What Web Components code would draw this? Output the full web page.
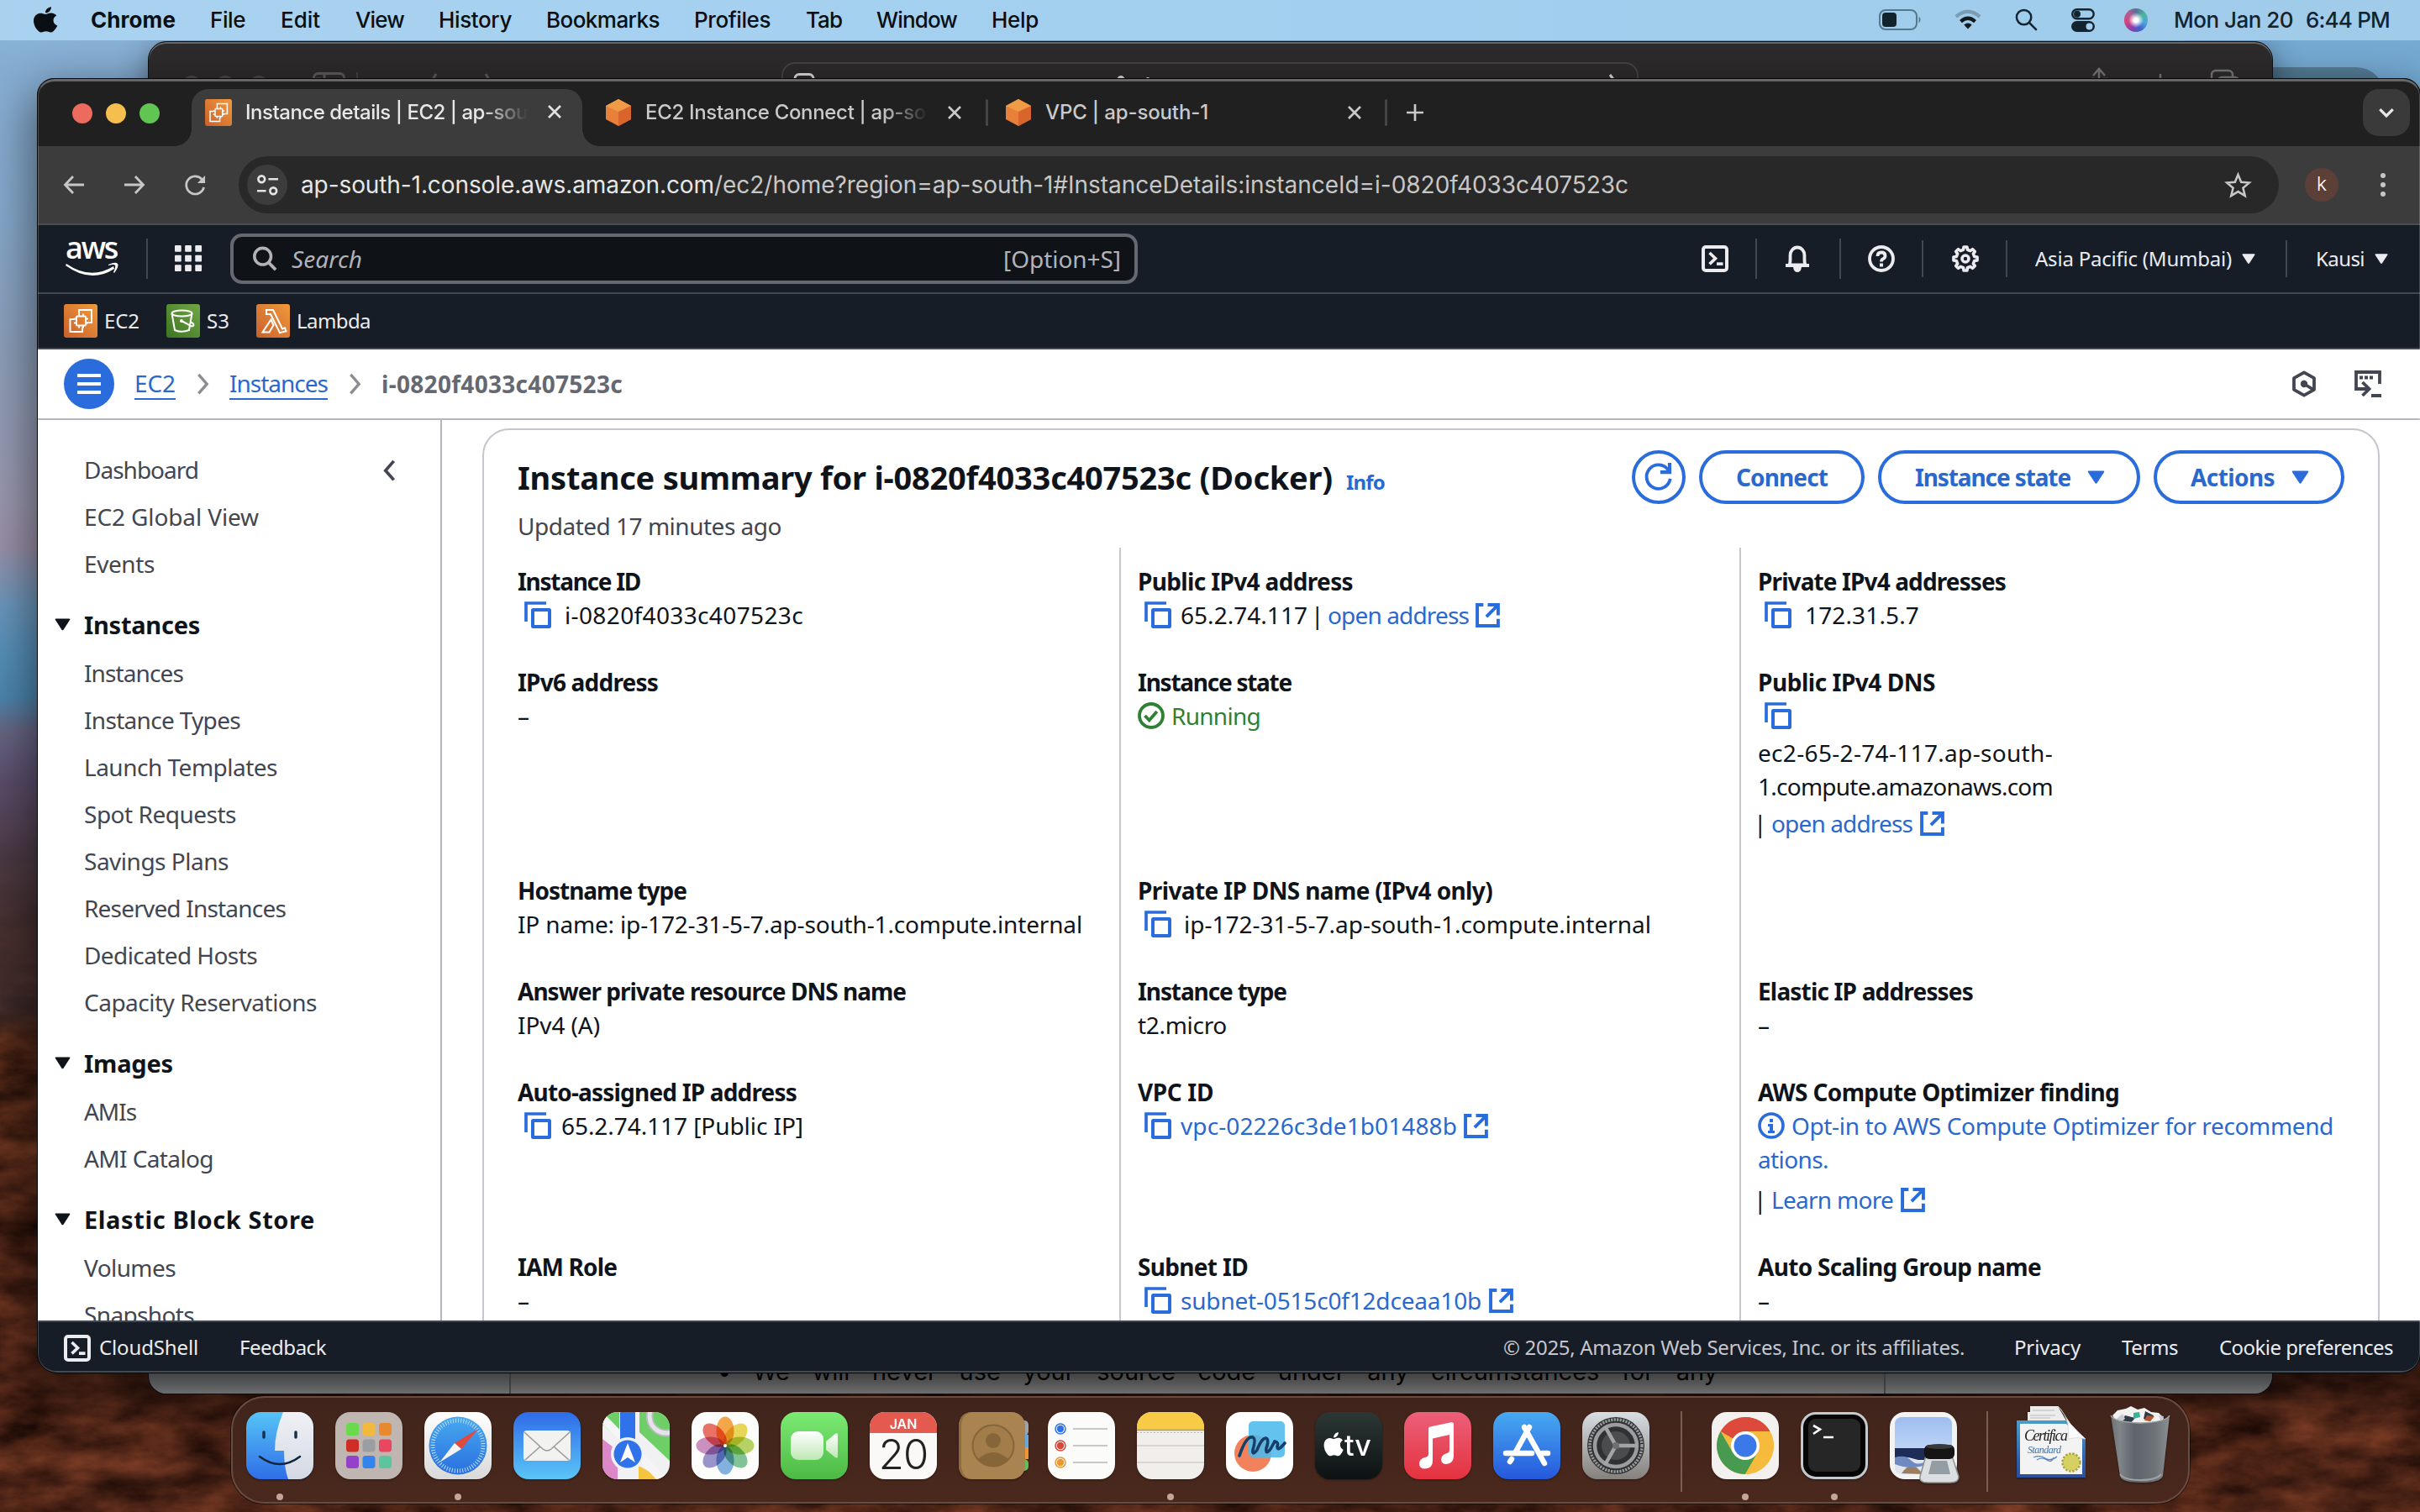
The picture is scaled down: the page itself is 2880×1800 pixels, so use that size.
<!DOCTYPE html>
<html lang="en">
<head>
<meta charset="utf-8">
<title>Instance details | EC2 | ap-south-1</title>
<style>
html,body{margin:0;padding:0;width:2880px;height:1800px;overflow:hidden;background:#3a1c12;font-family:"Noto Sans","Open Sans",sans-serif}
</style>
</head>
<body>
<mac-desktop></mac-desktop>
<script>
const APPLE='M12.152 6.896c-.948 0-2.415-1.078-3.96-1.04-2.04.027-3.91 1.183-4.961 3.014-2.117 3.675-.546 9.103 1.519 12.09 1.013 1.454 2.208 3.09 3.792 3.039 1.52-.065 2.09-.987 3.935-.987 1.831 0 2.35.987 3.96.948 1.637-.026 2.676-1.48 3.676-2.948 1.156-1.688 1.636-3.325 1.662-3.415-.039-.013-3.182-1.221-3.22-4.857-.026-3.04 2.48-4.494 2.597-4.559-1.429-2.09-3.623-2.324-4.39-2.376-2-.156-3.675 1.09-4.61 1.09zM15.53 3.83c.843-1.012 1.4-2.427 1.245-3.83-1.207.052-2.662.805-3.532 1.818-.78.896-1.454 2.338-1.273 3.714 1.338.104 2.715-.688 3.559-1.701';
const gear=(()=>{let p='';for(let i=0;i<8;i++){const c=i*45;[[-13,11],[-8,14.2],[8,14.2],[13,11]].forEach(([a,r])=>{const t=(c+a)*Math.PI/180;p+=(p?'L':'M')+(16+r*Math.sin(t)).toFixed(2)+' '+(16-r*Math.cos(t)).toFixed(2)});}return p+'Z'})();
/* [viewBox width, viewBox height, markup] */
const ICONS={
 apple:[26,31,`<path transform="translate(-4.2 .3) scale(1.44 1.26)" d="${APPLE}"/>`],
 battery:[51,25,`<rect x="1" y="1" width="44" height="23" rx="7" fill="none" stroke="#54788c" stroke-width="2"/><rect x="4" y="4" width="17" height="17" rx="4"/><path d="M47.500 8.500q4 4 0 8z" fill="#54788c"/>`],
 wifi:[36,26,`<g fill="none" stroke-width="4.600"><path d="M3 9.500q15-13 30 0" stroke="#7b9db4"/><path d="M9 15.500q9-8 18 0"/></g><path d="M13 19.500q5-4 10 0L18 25z"/>`],
 magnify:[28,28,`<g fill="none" stroke-width="2.600" stroke-linecap="round"><circle cx="11" cy="11" r="9"/><path d="M18 18l8 8"/></g>`],
 control:[28,28,`<rect x="1.200" y="1.200" width="25.500" height="11" rx="5.500" fill="none" stroke-width="2.400"/><circle cx="7" cy="6.700" r="4"/><rect y="15" width="28" height="13" rx="6.500"/><circle cx="21.500" cy="21.500" r="4" fill="#a4d0ef"/>`],
 back:[26,26,`<path d="M25 13H3M12 3L2.500 13 12 23" fill="none" stroke-width="2.800"/>`],
 fwd:[26,26,`<path d="M1 13H23M14 3l9.500 10L14 23" fill="none" stroke-width="2.800"/>`],
 reload:[26,26,`<path d="M23.500 15.500A11 11 0 1 1 21 5.500l2.500 3" fill="none" stroke-width="2.800"/><path d="M25 1v9.500h-9.500z"/>`],
 tune:[28,28,`<g fill="none" stroke-width="2.800"><circle cx="6.500" cy="6.500" r="4"/><path d="M15 6.500h12M1 21h11"/><circle cx="21" cy="21" r="4"/></g>`],
 star:[32,32,`<path d="M16 3l3.800 9.200 9.900.8-7.600 6.400 2.400 9.600L16 23.800 7.500 29l2.400-9.600L2.300 13l9.900-.8z" fill="none" stroke-width="2.600"/>`],
 dots:[8,30,`<circle cx="4" cy="4" r="3"/><circle cx="4" cy="15" r="3"/><circle cx="4" cy="26" r="3"/>`],
 x:[18,18,`<path d="M2 2l14 14M16 2L2 16" fill="none" stroke-width="2.700"/>`],
 plus:[22,22,`<path d="M11 1v20M1 11h20" fill="none" stroke-width="2.700"/>`],
 chevDown:[20,20,`<path d="M3 6.500l7 7 7-7" fill="none" stroke-width="3"/>`],
 ec2:[40,40,`<defs><linearGradient id="o" x1="0" y1="1" x2="1" y2="0"><stop stop-color="#c9602c"/><stop offset="1" stop-color="#f09a3c"/></linearGradient></defs><rect width="40" height="40" rx="3" fill="url(#o)"/><g fill="none" stroke="#fff" stroke-width="1.900"><path d="M13 18H7.500V33H22v-5.500M18 12V7h15v15h-5.500"/><rect x="15" y="14.500" width="11" height="11" rx="1"/><path d="M18 11.500v3M23 11.500v3M18 25.500v3M23 25.500v3M12 17.500h3M12 22.500h3M26 17.500h3M26 22.500h3"/></g>`],
 s3:[40,40,`<defs><linearGradient id="g" x1="0" y1="1" x2="1" y2="0"><stop stop-color="#3d7423"/><stop offset="1" stop-color="#70a743"/></linearGradient></defs><rect width="40" height="40" rx="3" fill="url(#g)"/><g fill="none" stroke="#fff" stroke-width="2"><ellipse cx="18.500" cy="11" rx="12" ry="3.600"/><path d="M6.500 11l3.500 20q8 3.500 17 0l3.500-20M18 20l12 6.500q4-.5 1.500-3.500l-2-1.500"/></g><circle cx="18" cy="20" r="2" fill="#fff"/>`],
 lambda:[40,40,`<defs><linearGradient id="l" x1="0" y1="1" x2="1" y2="0"><stop stop-color="#c9602c"/><stop offset="1" stop-color="#f09a3c"/></linearGradient></defs><rect width="40" height="40" rx="3" fill="url(#l)"/><path d="M12 7h8l11 22.500 3-1.200 1.500 4-7.500 1.900L17 12h-5zM17.500 18.500l3 6.500-5 8.500H7.500z" fill="none" stroke="#fff" stroke-width="2"/>`],
 cube:[30,32,`<path d="M15 0l15 8v16l-15 8L0 24V8z" fill="#e8803a"/><path d="M15 0l15 8-15 7L0 8z" fill="#f09c46"/><path d="M15 15l15-7v16l-15 8z" fill="#d9652c"/>`],
 grid:[34,32,[0,12.500,25].map(x=>[0,12,24].map(y=>`<rect x="${x}" y="${y}" width="8" height="8" rx="1"/>`).join('')).join('')],
 shell:[32,32,`<rect x="2" y="2" width="28" height="28" rx="3" fill="none" stroke-width="4"/><path d="M9.500 9l7 6.700-7 6.700" fill="none" stroke-width="3.600"/><path d="M18 20.300h7.500v3.600H18z"/>`],
 bell:[32,32,`<path d="M6.500 23.500C8 20 7.500 17 7.500 12a8.500 9.500 0 0 1 17 0c0 5-.5 8 1 11.500z" fill="none" stroke-width="3.800" stroke-linejoin="round"/><path d="M2 22h28v4H2zM11 26h10q-.8 6-5 6t-5-6z"/>`],
 help:[32,32,`<g fill="none" stroke-width="3.800"><circle cx="16" cy="16" r="14"/><path d="M11.500 13q0-4.500 4.500-4.500t4.500 4q0 2.500-2.600 3.700Q16 17 16 19.500"/></g><rect x="14" y="21.500" width="4" height="4"/>`],
 gear:[32,32,`<path d="${gear}" fill="none" stroke-width="3.600" stroke-linejoin="round"/><circle cx="16" cy="16" r="4" fill="none" stroke-width="3.600"/>`],
 search:[32,32,`<circle cx="13.500" cy="13" r="10.500" fill="none" stroke-width="3.800"/><path d="M21 21l9 9" fill="none" stroke-width="4"/>`],
 caret:[22,17,`<path d="M1.500.5h19q1.200.5.600 1.600L12.200 15.800q-1.200 1.200-2.400 0L.9 2.100Q.300 1 1.500.5z"/>`],
 burger:[28,26,`<path d="M0 1h28v4H0zM0 11h28v4H0zM0 21h28v4H0z"/>`],
 chevR:[16,28,`<path d="M2.500 2l10.500 12-10.500 12" fill="none" stroke-width="3.600"/>`],
 chevL:[16,28,`<path d="M13.500 2L3 14l10.500 12" fill="none" stroke-width="4"/>`],
 copy:[32,32,`<path d="M2 24V2H26" fill="none" stroke-width="3.700"/><rect x="10" y="10" width="20" height="20" rx=".5" fill="none" stroke-width="4"/>`],
 ext:[28,28,`<path d="M9 2H2V26H26V18M14 2H26V14M25.500 2.500L12.500 15.500" fill="none" stroke-width="3.800"/>`],
 ok:[32,32,`<g fill="none" stroke-width="3.800"><circle cx="16" cy="16" r="14"/><path d="M8.500 16l5.300 5.500 9-10.500"/></g>`],
 info:[32,32,`<circle cx="16" cy="16" r="14" fill="none" stroke-width="3.600"/><path d="M14 8h4v4h-4zM12 14h6v8h2v3h-8v-3h2v-5h-2z"/>`],
 refresh:[36,36,`<path d="M32.500 20A15 15 0 1 1 30 9l2 3" fill="none" stroke-width="4"/><path d="M20 9.500h9.500V0h4.500v14H20z"/>`],
 hex:[32,32,`<path d="M16 2.300L28 9.200V22.800L16 29.700 4 22.800V9.200z" fill="none" stroke-width="3.800" stroke-linejoin="round"/><circle cx="16" cy="16" r="4.200"/><path d="M16 16l10.500 6.500" stroke-width="3.600"/>`],
 feed:[32,32,`<path d="M2 24V2H30V16" fill="none" stroke-width="3.800"/><path d="M2 22H17M9.500 14l8 8-8 8" fill="none" stroke-width="3.800"/><path d="M6 6.500h4v4H6zM12 6.500h4v4h-4zM18 6.500h4v4h-4zM20 28h12v4H20z"/>`]
};
const ic=(n,w,c,st='')=>`<svg-icon name="${n}" size="${w}" style="${c?`color:${c};`:''}${st}"></svg-icon>`;
const t=(s,w,st='')=>`<fit-text w="${w}" style="${st}">${s}</fit-text>`;
/* Lays items [left, width, markup] along a flex row that begins at `start`. */
const row=(start,items)=>{let c=start;return items.map(([x,w,h])=>{const m=x-c;c=x+w;return `<div class="i" style="margin-left:${m}px;width:${w}px">${h}</div>`}).join('')};
class Base extends HTMLElement{
 connectedCallback(){if(this.shadowRoot)return;this.attachShadow({mode:'open'}).innerHTML=`<style>:host{display:block;box-sizing:border-box}*{box-sizing:border-box}.i{flex:none;display:flex;align-items:center;white-space:nowrap}${this.css||''}</style>${this.html()}`}
}
customElements.define('svg-icon',class extends Base{
 css=':host{display:inline-block;flex:none;line-height:0}svg{display:block;fill:currentColor;stroke:none;overflow:visible}svg [stroke-width]:not([stroke]){stroke:currentColor}';
 html(){const [w,h,m]=ICONS[this.getAttribute('name')];const s=+this.getAttribute('size');return `<svg viewBox="0 0 ${w} ${h}" width="${s}" height="${s*h/w}">${m}</svg>`}
});
customElements.define('mac-menubar',class extends Base{
 css=':host{position:absolute;left:0;top:0;width:2880px;height:48px;background:linear-gradient(90deg,#a9d2ef,#a2cfef 60%,#a0cbe9);font:450 26px/46px Inter,sans-serif;color:#0a0f14}nav{display:flex;height:47px}.siri{width:28px;height:28px;border-radius:50%;background:radial-gradient(circle at 50% 50%,#fff 0 12%,transparent 45%),conic-gradient(#5b6d9c,#47b79a,#4fa6e0,#3f63c8,#8a3fb0,#d3447c,#b85a8c,#5b6d9c)}';
 html(){return `<nav>${row(0,[[41,26,ic('apple',26)],[108,101,t('Chrome',101,'font-weight:700')],[250,41,t('File',42)],[334,46,t('Edit',47)],[423,57,t('View',58)],[522,86,t('History',87)],[650,133,t('Bookmarks',135)],[826,89,t('Profiles',91)],[959,42,t('Tab',43)],[1043,95,t('Window',96)],[1180,55,t('Help',56)],
 [2236,51,ic('battery',51,'#13242e')],[2325,36,ic('wifi',34,'#0f1a20')],[2398,28,ic('magnify',27,'#13242e')],[2465,28,ic('control',28,'#13242e')],[2528,28,'<div class="siri"></div>'],[2587,146,t('Mon Jan 20',142,'color:#13242e')],[2744,100,t('6:44 PM',100,'color:#13242e')]])}</nav>`}
});
customElements.define('back-window',class extends Base{
 css=`:host{position:absolute;left:176px;top:49px;width:2529px;height:1611px;border-radius:22px;overflow:hidden;background:#2d2b2c;border:1px solid #0c1319;box-shadow:inset 0 2px 0 #69696a,0 8px 36px rgba(0,0,0,.45);display:flex;flex-direction:column;justify-content:space-between}
 .top{height:56px;padding-top:24px;display:flex;color:#5c595a}.top .i{height:40px;align-items:flex-start}.dot{width:24px;height:24px;border-radius:50%;background:#4b4849;margin-top:16px}.pill{width:1020px;height:60px;border:2px solid #474445;border-radius:16px}
 .bot{height:60px;background:linear-gradient(#5c5c5c 45%,#777 65%,#969696);display:flex}.side{flex:none;border-right:2px solid #5e5e5e;width:431px;background:rgba(130,150,165,.13)}.doc{width:1634px;font:400 29px/34px Inter,sans-serif;color:#050505;padding:17px 0 0 246px;display:flex;height:60px}.doc p{margin:0 0 0 32px;width:1148px;text-align:justify;text-align-last:justify}.bul{width:10px}.r{flex:1;border-left:2px solid #5e5e5e;background:rgba(130,150,165,.13)}`;
 html(){return `<div class="top">${row(177,[[216,24,'<div class="dot"></div>'],[256,24,'<div class="dot"></div>'],[296,24,'<div class="dot"></div>'],[372,40,'<svg width="40" height="36"><rect x="1.500" y="13.500" width="36" height="30" rx="5" fill="none" stroke="#5e5b5c" stroke-width="3"/><path d="M14 14v30M4 20h6" stroke="#5e5b5c" stroke-width="3"/></svg>'],[424,2,'<div style="width:2px;height:40px;margin-top:12px;background:#444"></div>'],[505,16,'<svg width="16" height="36"><path d="M14 14L3 32" stroke="#5e5b5c" stroke-width="3"/></svg>'],[576,16,'<svg width="16" height="36"><path d="M2 14l11 18" stroke="#5e5b5c" stroke-width="3"/></svg>'],[930,1020,'<div class="pill"><svg width="1010" height="30"><rect x="14" y="12.500" width="22" height="30" rx="5" fill="none" stroke="#ddd" stroke-width="3"/><path d="M398 19q4-7 8 0M434 16v5M984 13l6 8" fill="none" stroke="#ddd" stroke-width="3"/></svg></div>'],[2486,24,'<svg width="26" height="40"><path d="M12 30V9M5 16l7-8 7 8M3 20h4M17 20h6" fill="none" stroke="#777" stroke-width="2.500"/></svg>'],[2562,20,'<svg width="20" height="40"><path d="M9 14v20" stroke="#777" stroke-width="2.500"/></svg>'],[2630,34,'<svg width="36" height="40"><rect x="2" y="10" width="25" height="24" rx="5" fill="none" stroke="#777" stroke-width="2.500"/><rect x="10" y="18" width="24" height="24" rx="4" fill="#2d2b2c" stroke="#777" stroke-width="2.500"/></svg>']])}</div>
 <div class="bot"><div class="side"></div><div class="doc"><span class="bul">•</span><p>We will never use your source code under any circumstances for any</p></div><div class="r"></div></div>`}
});
customElements.define('tab-strip',class extends Base{
 css=`:host{height:80px;background:#202020;display:flex;font:500 24px/30px Inter,sans-serif;color:#c9c9c9}
 .i{height:80px}.light{width:24px;height:24px;border-radius:50%;margin-top:2px}
 .act{width:465px;height:68px;margin-top:12px;background:#3c3c3c;border-radius:20px 20px 0 0;display:flex;align-items:center;position:relative;padding:0 0 12px 16px;color:#e8e8e8}
 .act:before,.act:after{content:"";position:absolute;bottom:0;width:20px;height:20px;left:-20px;background:radial-gradient(circle at 0 0,transparent 19.500px,#3c3c3c 20px)}.act:after{left:auto;right:-20px;background:radial-gradient(circle at 100% 0,transparent 19.500px,#3c3c3c 20px)}
 .fade{overflow:hidden;-webkit-mask:linear-gradient(90deg,#000 84%,transparent);mask:linear-gradient(90deg,#000 84%,transparent)}.sep{width:3px;height:32px;background:#454545;border-radius:2px}.drop{width:56px;height:56px;border-radius:19px;background:#3a3a3a;display:flex;align-items:center;justify-content:center}`;
 html(){const L=c=>`<div class="light" style="background:${c}"></div>`;return row(45,[[86,24,L('#ec6a5e')],[126,24,L('#f4bf4f')],[166,24,L('#61c554')],
 [228,465,`<div class="act">${ic('ec2',32)}<div class="fade" style="margin-left:16px;width:336px">${t('Instance details | EC2 | ap-sou',336)}</div><div style="margin-left:23px">${ic('x',18,'#e0e0e0')}</div></div>`],
 [721,30,ic('cube',30)],[768,336,`<div class="fade" style="width:336px">${t('EC2 Instance Connect | ap-so',334)}</div>`],[1127,18,ic('x',18)],[1173,3,'<div class="sep"></div>'],[1197,30,ic('cube',30)],[1244,194,t('VPC | ap-south-1',194)],[1603,18,ic('x',18)],[1648,3,'<div class="sep"></div>'],[1673,22,ic('plus',22)],[2812,56,`<div class="drop">${ic('chevDown',22,'#e8e8e8')}</div>`]])}
});
customElements.define('tool-bar',class extends Base{
 css=`:host{height:94px;background:#3c3c3c;border-bottom:2px solid #4b4e4f;display:flex;font:400 28px/38px Inter,sans-serif;color:#c7c7c7}.i{height:92px}.omni{width:2428px;height:68px;border-radius:34px;background:#282828;display:flex;align-items:center}.site{width:48px;height:48px;border-radius:50%;background:#3c3c3c;display:flex;align-items:center;justify-content:center;color:#e3e3e3}.av{width:40px;height:40px;border-radius:50%;background:#5c4037;color:#fff;text-align:center;font:300 23px/38px Inter,sans-serif}`;
 html(){return row(45,[[75,26,ic('back',26)],[147,26,ic('fwd',26)],[220,26,ic('reload',25)],[284,2428,`<div class="omni">${row(284,[[294,48,`<div class="site">${ic('tune',27)}</div>`],[358,492,t('ap-south-1.console.aws.amazon.com',492,'color:#e6e6e6')],[850,1088,t('/ec2/home?region=ap-south-1#InstanceDetails:instanceId=i-0820f4033c407523c',1088)],[2648,31,ic('star',31)]])}</div>`],[2743,40,'<div class="av">k</div>'],[2832,8,ic('dots',8)]])}
});
customElements.define('aws-nav',class extends Base{
 css=`:host{background:#161d26;color:#ebebf0;font:400 24px/36px "Noto Sans",sans-serif;height:148px}fit-text{margin-top:-1px}.a,.b{display:flex}.a{height:82px;border-bottom:2px solid #424650}.a .i{height:80px}.b{height:66px;border-bottom:2px solid #424650}.b .i{height:64px}.sep{width:2px;height:48px;background:#424650}.sep.s{height:44px}.box{width:1080px;height:60px;border:4px solid #656871;border-radius:14px;background:#0f1217;display:flex;color:#b2b2b8;font-size:28px}.box .i{height:52px}.logo{display:flex;flex-direction:column;padding-top:16px;align-items:flex-start;height:80px}`;
 html(){const s=(x,c='')=>[x,2,`<div class="sep ${c}"></div>`];return `<div class="a">${row(45,[[78,64,`<div class="logo">${t('aws',61,'font:600 36px/24px \'Open Sans\',sans-serif;color:#fff')}<svg width="66" height="18" style="margin-top:5px"><path d="M1 2q29 20 56 3l1 3Q30 26 0 4z" fill="#fff"/><path d="M51 3q9-4 11-1t-4 11l-1-1q3-6 2-8t-8 0z" fill="#fff"/></svg></div>`],s(174),[208,34,ic('grid',33)],[274,1080,`<div class="box">${row(278,[[300,31,ic('search',30)],[347,84,t('Search',84,'font-style:italic')],[1194,140,t('[Option+S]',140)]])}</div>`],
 [2025,32,ic('shell',32)],s(2089),[2123,32,ic('bell',32)],s(2189),[2223,32,ic('help',32)],s(2287,'s'),[2323,32,ic('gear',32)],s(2387,'s'),[2422,233,t('Asia Pacific (Mumbai)',234)],[2668,16,ic('caret',16)],s(2720,'s'),[2756,58,t('Kausi',58)],[2826,16,ic('caret',16)]])}</div>
 <div class="b">${row(45,[[76,40,ic('ec2',40)],[124,42,t('EC2',42)],[198,40,ic('s3',40)],[246,27,t('S3',27)],[305,40,ic('lambda',40)],[353,88,t('Lambda',88)]])}</div>`}
});
customElements.define('crumb-bar',class extends Base{
 css=`:host{height:84px;background:#fff;border-bottom:2px solid #b6b6bd;display:flex;font:400 28px/36px "Noto Sans",sans-serif}.i{height:82px}.m{width:60px;height:60px;border-radius:50%;background:#2a6cdb;color:#fff;display:flex;align-items:center;justify-content:center}.l{color:#2a68ce;border-bottom:2px solid #2a68ce;height:38px}`;
 html(){return row(45,[[76,60,`<div class="m">${ic('burger',28)}</div>`],[160,49,`<div class="l">${t('EC2',49)}</div>`],[234,16,ic('chevR',15,'#8c8c94')],[273,118,`<div class="l">${t('Instances',117)}</div>`],[415,16,ic('chevR',15,'#8c8c94')],[454,288,t('i-0820f4033c407523c',287,'font-weight:700;color:#656871')],[2726,32,ic('hex',32,'#424650')],[2802,32,ic('feed',32,'#424650')]])}
});
customElements.define('side-nav',class extends Base{
 css=`:host{width:481px;flex:none;height:1072px;overflow:hidden;border-right:2px solid #b4b4bb;padding-top:31px;font:400 28px/56px "Noto Sans",sans-serif;color:#424650}.r{height:56px;padding-left:55px;display:flex;align-items:center}.r svg-icon{margin:2px 0 0 220px}.h{height:56px;margin:17px 0 1px;padding-left:20px;display:flex;align-items:center;color:#0f141a;font-weight:700;font-size:29px}.h fit-text{margin-left:16px}`;
 html(){const r=(s,w,x='')=>`<div class="r">${t(s,w)}${x}</div>`,h=(s,w)=>`<div class="h">${ic('caret',19,'','margin-top:-2px')}${t(s,w)}</div>`;
 return r('Dashboard',136,ic('chevL',15))+r('EC2 Global View',208)+r('Events',84)+h('Instances',138)+r('Instances',118)+r('Instance Types',186)+r('Launch Templates',230)+r('Spot Requests',181)+r('Savings Plans',172)+r('Reserved Instances',240)+r('Dedicated Hosts',206)+r('Capacity Reservations',277)+h('Images',106)+r('AMIs',62)+r('AMI Catalog',154)+h('Elastic Block Store',275)+r('Volumes',109)+r('Snapshots',131)}
});
customElements.define('aws-button',class extends Base{
 css=`:host{height:64px;border:4px solid #2a6cdb;border-radius:32px;color:#2a68ce;display:flex;align-items:center;font:700 28px/40px "Noto Sans",sans-serif}`;
 html(){return '<slot></slot>'}
});
customElements.define('kv-pair',class extends Base{
 css=`:host{font:400 28px/40px "Noto Sans",sans-serif;color:#0f141a;flex:none}.k{font-weight:700;height:40px;display:flex}`;
 html(){return `<div class="k">${t(this.getAttribute('label'),this.getAttribute('lw'))}</div><slot></slot>`}
});
customElements.define('instance-summary',class extends Base{
 css=`:host{margin:10px 0 0 48px;width:2258px;height:1100px;flex:none;border:2px solid #c6c6cd;border-radius:32px 32px 0 0;font:400 28px/40px "Noto Sans",sans-serif;color:#0f141a}
 .hd{display:flex;height:94px;padding-top:24px;align-items:flex-start}.hd .i{height:64px}.up{padding-left:40px;height:46px;color:#424650;display:flex}
 .cols{display:flex}.c{width:738px;padding:20px 0 0 20px;border-left:2px solid #c6c6cd;height:960px}.c:first-child{border:0;padding-left:40px;width:756px}
 .v{display:flex;height:40px;align-items:center}.bar{width:16px;flex:none;text-indent:-5px}svg-icon{color:#2a6cdb}`;
 html(){
 const v=(...a)=>`<div class="v">${a.join('')}</div>`;
 const cp=(g=12)=>ic('copy',32,'',`margin:0 ${g}px 0 8px`);
 const ex=(m=8)=>ic('ext',29,'',`margin:0 0 0 ${m}px`);
 const k=(l,lw,h,b)=>`<kv-pair label="${l}" lw="${lw}" style="height:${h}px">${b}</kv-pair>`;
 const A=(s,w)=>t(s,w,'color:#2a68ce');
 const bar='<span class="bar">|</span>';
 return `<div class="hd">${row(576,[[616,970,t('Instance summary for i-0820f4033c407523c (Docker)',970,'font-size:38px;font-weight:700')],[1602,46,t('Info',46,'font-size:24px;font-weight:700;color:#2a68ce;margin-top:11px')],[1942,64,`<aws-button style="width:64px;padding-left:11px">${ic('refresh',34)}</aws-button>`],[2022,197,`<aws-button style="width:197px;padding-left:40px">${t('Connect',109)}</aws-button>`],[2235,312,`<aws-button style="width:312px;padding-left:40px">${t('Instance state',185)}${ic('caret',21,'','margin-left:20px')}</aws-button>`],[2563,227,`<aws-button style="width:227px;padding-left:40px">${t('Actions',100)}${ic('caret',21,'','margin-left:20px')}</aws-button>`]])}</div>
 <div class="up">${t('Updated 17 minutes ago',314)}</div>
 <div class="cols"><div class="c">
 ${k('Instance ID',146,120,v(cp(16),t('i-0820f4033c407523c',284)))}${k('IPv6 address',167,248,v('–'))}${k('Hostname type',201,120,v(t('IP name: ip-172-31-5-7.ap-south-1.compute.internal',672)))}${k('Answer private resource DNS name',462,120,v(t('IPv4 (A)',98)))}${k('Auto-assigned IP address',332,208,v(cp(12),t('65.2.74.117 [Public IP]',288)))}${k('IAM Role',118,120,v('–'))}
 </div><div class="c">
 ${k('Public IPv4 address',256,120,v(cp(11),t('65.2.74.117',151),`<span style="margin:0 6px 0 4px;width:14px;text-align:center">|</span>`,A('open address',168),ex()))}${k('Instance state',183,248,v(ic('ok',32,'#2f8035','margin-right:8px'),t('Running',106,'color:#2f8035')))}${k('Private IP DNS name (IPv4 only)',422,120,v(cp(15),t('ip-172-31-5-7.ap-south-1.compute.internal',556)))}${k('Instance type',177,120,v(t('t2.micro',106)))}${k('VPC ID',90,208,v(cp(11),A('vpc-02226c3de1b01488b',329),ex()))}${k('Subnet ID',131,120,v(cp(11),A('subnet-0515c0f12dceaa10b',358),ex(9)))}
 </div><div class="c">
 ${k('Private IPv4 addresses',295,120,v(cp(16),t('172.31.5.7',136)))}${k('Public IPv4 DNS',211,248,v(cp())+`<div style="height:4px"></div>`+v(t('ec2-65-2-74-117.ap-south-',351))+v(t('1.compute.amazonaws.com',351))+`<div style="height:4px"></div>`+v(bar,A('open address',168),ex(9)))}<div style="height:120px"></div>${k('Elastic IP addresses',256,120,v('–'))}${k('AWS Compute Optimizer finding',430,208,v(ic('info',32,'','margin-right:8px'),A('Opt-in to AWS Compute Optimizer for recommend',645))+v(A('ations.',84))+`<div style="height:8px"></div>`+v(bar,A('Learn more',145),ex(9)))}${k('Auto Scaling Group name',337,120,v('–'))}
 </div></div>`}
});
customElements.define('aws-footer',class extends Base{
 css=`:host{height:62px;background:#161d26;border-top:2px solid #424650;display:flex;font:400 24px/36px "Noto Sans",sans-serif;color:#ebebf0}.i{height:61px}fit-text{margin-top:-1px}`;
 html(){return row(45,[[76,32,ic('shell',32)],[118,118,t('CloudShell',118)],[285,103,t('Feedback',103)],[1789,550,t('© 2025, Amazon Web Services, Inc. or its affiliates.',549,'color:#c6c6cd')],[2397,79,t('Privacy',79)],[2525,67,t('Terms',67)],[2641,208,t('Cookie preferences',207)]])}
});
customElements.define('browser-window',class extends Base{
 css=`:host{position:absolute;left:44px;top:93px;width:2837px;height:1542px;border-radius:20px 20px 24px 24px;overflow:hidden;background:#161d26;border:1px solid #05080b;box-shadow:0 20px 55px 6px rgba(0,0,0,.5)}.body{display:flex;height:1072px;overflow:hidden;background:#fff}.rim{position:absolute;inset:0;border-radius:20px 20px 22px 22px;border:1.500px solid rgba(255,255,255,.2);border-top:3px solid #666;border-bottom-width:2px;pointer-events:none}`;
 html(){return `<tab-strip></tab-strip><tool-bar></tool-bar><aws-nav></aws-nav><crumb-bar></crumb-bar><div class="body"><side-nav></side-nav><instance-summary></instance-summary></div><aws-footer></aws-footer><div class="rim"></div>`}
});
const petals=['#f59a2a','#e8d23c','#a9cf4a','#6dbb87','#6fa6dc','#8a83c4','#c67fb8','#ea5a4a'].map((c,i)=>`<ellipse cx="40" cy="22.500" rx="10.500" ry="17" transform="rotate(${i*45} 40 40)" fill="${c}" opacity=".85" style="mix-blend-mode:multiply"/>`).join('');
const sq=(f,m='')=>`<rect width="80" height="80" rx="18" fill="${f}"/>${m}`;
const DOCK={
 finder:`<clipPath id="c"><rect width="80" height="80" rx="18"/></clipPath><linearGradient id="a" x2="0" y2="1"><stop stop-color="#56c4f6"/><stop offset="1" stop-color="#2f6ee8"/></linearGradient><linearGradient id="b" x2="0" y2="1"><stop stop-color="#f0f1f5"/><stop offset="1" stop-color="#d3d9e3"/></linearGradient><g clip-path="url(#c)"><rect width="80" height="80" fill="url(#a)"/><path d="M44 0Q34 24 34 46h11q0 20 5 34h30V0z" fill="url(#b)"/><path d="M21 24v6M59 24v6" stroke="#19304a" stroke-width="3.500" stroke-linecap="round"/><path d="M16 53q24 18 48 0" fill="none" stroke="#14263c" stroke-width="2.600" stroke-linecap="round"/></g>`,
 launch:sq('#bfb6b1',['#6bd94e','#f2b93c','#e8892e','#cf2e26','#9a9da1','#ea4660','#9440c9','#3484ee','#5cc5a0'].map((c,i)=>`<rect x="${13+i%3*19.500}" y="${13+(i/3|0)*19.500}" width="15" height="15" rx="3.500" fill="${c}"/>`).join('')),
 safari:`<linearGradient id="a" x2="0" y2="1"><stop stop-color="#fff"/><stop offset="1" stop-color="#d9d9d9"/></linearGradient><linearGradient id="b" x2="0" y2="1"><stop stop-color="#47a9ef"/><stop offset="1" stop-color="#2a6fe0"/></linearGradient>${sq('url(#a)')}<circle cx="40" cy="40" r="34.500" fill="url(#b)"/><circle cx="40" cy="40" r="30" fill="none" stroke="#bfe0fb" stroke-width="5" stroke-dasharray="1 2.140"/><path d="M64 20L44 44l-8-7z" fill="#e0493e"/><path d="M18 60l18-23 8 7z" fill="#f4f4f4"/>`,
 mail:`<linearGradient id="a" x2="0" y2="1"><stop stop-color="#2f6be8"/><stop offset="1" stop-color="#5bc6f7"/></linearGradient>${sq('url(#a)')}<rect x="12" y="22" width="56" height="36" rx="4" fill="#f2f2f1"/><path d="M13 24l22 20q5 4 10 0l22-20M14 57l18-16M66 57L48 41" fill="none" stroke="#9b9b9b" stroke-width="1.600"/>`,
 maps:`<clipPath id="c"><rect width="80" height="80" rx="18"/></clipPath><g clip-path="url(#c)"><rect width="80" height="80" fill="#f1f1f3"/><path d="M0 0h20v34L0 14zM44 0h36v58L44 24z" fill="#6dcf65"/><path d="M0 32l18 14v34H0z" fill="#dc88c8"/><path d="M43 64l30 16H43z" fill="#f5c43f"/><path d="M0 14l64 66h14L0 0z" fill="#f5f5f7"/><path d="M21 0h18v46H21z" fill="#2f72ea"/><circle cx="76" cy="5" r="20" fill="none" stroke="#b7b9bf" stroke-width="9"/><circle cx="76" cy="5" r="20" fill="none" stroke="#e4e5e9" stroke-width="5"/><circle cx="30" cy="50" r="20" fill="#f0f1f5"/><circle cx="30" cy="50" r="16.500" fill="#2f72ea"/><path d="M30 37l9 23-9-6-9 6z" fill="#fff"/></g>`,
 photos:sq('#fcfcfb',petals+'<circle cx="40" cy="40" r="2" fill="#fff"/>'),
 facetime:`<linearGradient id="a" x2="0" y2="1"><stop stop-color="#7ceb74"/><stop offset="1" stop-color="#4cb944"/></linearGradient><linearGradient id="b" x2="0" y2="1"><stop stop-color="#fff"/><stop offset="1" stop-color="#bde8b4"/></linearGradient>${sq('url(#a)')}<rect x="12" y="23" width="39" height="34" rx="9" fill="url(#b)"/><path d="M54 35l11-9q3-2 3 1v26q0 3-3 1l-11-9z" fill="url(#b)"/>`,
 cal:`<clipPath id="c"><rect width="80" height="80" rx="18"/></clipPath><g clip-path="url(#c)"><rect width="80" height="80" fill="#faf9f8"/><rect width="80" height="25" fill="#e55a4e"/></g><text x="40" y="19.500" text-anchor="middle" font-family="Inter,sans-serif" font-weight="600" font-size="16" fill="#fff">JAN</text><text x="40" y="68" text-anchor="middle" font-family="Inter,sans-serif" font-weight="300" font-size="49" letter-spacing="-1" fill="#222">20</text>`,
 contacts:`<rect x="68" y="10" width="15" height="18" rx="5" fill="#9fa2a6"/><rect x="68" y="27" width="15" height="16" fill="#64a9dc"/><rect x="68" y="42" width="15" height="14" fill="#ee9433"/><rect x="68" y="56" width="15" height="14" rx="5" fill="#66bb5b"/><rect width="79" height="80" rx="16" fill="#aa8450"/><path d="M16 0Q3 2 3 18v44q0 16 13 18Q0 80 0 62V18Q0 0 16 0z" fill="#8d6c3e"/><circle cx="41" cy="40" r="24.500" fill="#a27c49" stroke="#866638" stroke-width="2"/><circle cx="41" cy="34" r="9" fill="#866638"/><path d="M23 56q18-16 36 0-8 9-18 9t-18-9z" fill="#866638"/>`,
 reminders:sq('#fbfbfa',[['#2f73ea',20],['#dd4537',40],['#ec962d',60]].map(([c,y])=>`<circle cx="15" cy="${y}" r="6" fill="none" stroke="${c}" stroke-width="1.500"/><circle cx="15" cy="${y}" r="4.200" fill="${c}"/><path d="M30 ${y}h41" stroke="#b7b7b9" stroke-width="1.600"/>`).join('')),
 notes:`<clipPath id="c"><rect width="80" height="80" rx="18"/></clipPath><g clip-path="url(#c)"><rect width="80" height="80" fill="#f1efec"/><rect width="80" height="21" fill="#f7cb45"/><path d="M0 21.500h80" stroke="#a99b70" stroke-width="1.500"/><path d="M0 24.500h80" stroke="#aaa" stroke-dasharray="1.500 2.500"/><path d="M0 40h80M0 60h80" stroke="#cfcdca" stroke-width="1.500"/></g>`,
 freeform:`${sq('#fff')}<circle cx="32" cy="49" r="22" fill="#f1825c"/><rect x="27" y="11" width="43" height="43" rx="5" fill="#4db9ec" opacity=".88"/><path d="M16 52q8-24 16-22 4 2 0 15-1 8 5 0 7-17 12-13 2 3-1 11-1 9 5 1l5-9q5 1 3 6 0 7 9-4" fill="none" stroke="#153f68" stroke-width="3.600" stroke-linecap="round"/>`,
 tv:`<linearGradient id="a" x2="0" y2="1"><stop stop-color="#2c3835"/><stop offset="1" stop-color="#0d1213"/></linearGradient>${sq('url(#a)')}<path transform="translate(8 24) scale(1.180)" d="${APPLE}" fill="#fff"/><text x="35" y="52" font-family="Inter,sans-serif" font-size="34" font-weight="500" fill="#fff">tv</text>`,
 music:`<linearGradient id="a" x2="0" y2="1"><stop stop-color="#ec6079"/><stop offset="1" stop-color="#e4323f"/></linearGradient>${sq('url(#a)')}<path d="M30 20q0-2 2-2.400l25-5.400q3-.4 3 2V52q0 9-8.500 10-6 0-6.500-5 0-6 7-8 3-.5 3-4V27l-20 4.500V58q0 9-9 9.500-7 0-7-6 0-6 7-7.500 4-1 4-4z" transform="translate(-1 0)" fill="#fff"/>`,
 store:`<linearGradient id="a" x2="0" y2="1"><stop stop-color="#48aaf1"/><stop offset="1" stop-color="#2558dc"/></linearGradient>${sq('url(#a)')}<g stroke="#fff" stroke-width="6.500" stroke-linecap="round"><path d="M43 18L27 47M20 59l2-3M37 18l24 43M15 49h31M58 49h7"/></g>`,
 settings:`<linearGradient id="a" x2="0" y2="1"><stop stop-color="#d7dee3"/><stop offset="1" stop-color="#85807c"/></linearGradient>${sq('url(#a)')}<circle cx="40" cy="40" r="34" fill="#2f3133"/><circle cx="40" cy="40" r="31" fill="none" stroke="#9a9b9c" stroke-width="3.500" stroke-dasharray="2.200 1.300"/><circle cx="40" cy="40" r="25" fill="none" stroke="#9b9d9f" stroke-width="4.500"/><circle cx="40" cy="40" r="17" fill="#4a4c4e"/><path d="M40 40h26M40 40L27 17M40 40L27 63" stroke="#a2a4a6" stroke-width="4.500"/><circle cx="40" cy="40" r="4" fill="#6d6f71"/>`,
 chrome:`${sq('#f3f1f0')}<circle cx="40" cy="40" r="34" fill="#f6bb3c"/><path d="M40 40L10.600 23A34 34 0 0 1 69.400 23z" fill="#dd4a3c"/><path d="M40 6a34 34 0 0 1 29.400 17H40z" fill="#dd4a3c"/><path d="M10.600 23A34 34 0 0 0 40 74l14.700-25.500L40 40l-14.700 8.500z" fill="#479a50"/><path d="M40 23h29.400A34 34 0 0 1 40 74l14.700-25.500z" fill="#f6bb3c"/><circle cx="40" cy="40" r="17" fill="#fff"/><circle cx="40" cy="40" r="13.500" fill="#3c79e8"/>`,
 term:`<rect width="80" height="80" rx="18" fill="#c3cacf"/><rect x="3" y="3" width="74" height="74" rx="15" fill="#050505"/><rect x="9" y="8" width="62" height="63" rx="9" fill="#262626"/><path d="M15 16l8 4.500-8 5.500M27 30h12" fill="none" stroke="#fff" stroke-width="2.600"/>`,
 preview:`<linearGradient id="a" x2="0" y2="1"><stop stop-color="#9dbdf0"/><stop offset="1" stop-color="#c5d9f6"/></linearGradient>${sq('#f3f3f4')}<rect x="6" y="6" width="68" height="45" rx="8" fill="url(#a)"/><path d="M6 43h68v14H6z" fill="#1e2c58"/><path d="M6 56q10-5 24 0t40-2v12q0 8-8 8H14q-8 0-8-8z" fill="#dfe6ef"/><path d="M14 73q8-12 18-7l8 8z" fill="#9c7d60"/><path d="M6 54q12-4 20 4t20-2v6q-20 8-40 0z" fill="#6f8ac0"/><path d="M43 52h31l8 25q0 7-10 7H45q-10 0-9-7z" fill="#dcdfe1" stroke="#8e9295" stroke-width="1.500"/><path d="M50 58h18l4 16H46z" fill="#5a6472" opacity=".55"/><rect x="41" y="39" width="36" height="17" rx="6" fill="#151515"/><ellipse cx="59" cy="41" rx="16" ry="3" fill="#3a3a3a"/>`,
 cert:`<linearGradient id="a" x2="0" y2="1"><stop stop-color="#4a9fc6"/><stop offset=".7" stop-color="#2b5fae"/><stop offset="1" stop-color="#2c4f9c"/></linearGradient><path d="M13 12V0h3v-7h33l14 24H13z" fill="#ececec"/><path d="M19-2h26M16 4h30M16 7h24" stroke="#bbb" stroke-width="1"/><path d="M0 10h60l22 22v46H0z" fill="url(#a)"/><path d="M4 14h55l19 18v42H4z" fill="#f3f3f3"/><path d="M49-7q3 2 7 9l8 12q9 10 18 18-10-3-21 0 1-5 0-18Q58 2 49-7z" fill="#fbfbfb" stroke="#d4d4d4" stroke-width=".7"/><text x="9" y="34" font-family="Liberation Serif,serif" font-style="italic" font-size="18" fill="#222" textLength="52">Certifica</text><text x="13" y="49" font-family="Liberation Serif,serif" font-style="italic" font-size="12" fill="#3d6fb0" textLength="40">Standard</text><path d="M20 54q7-3 14 1t14-2M24 57q6-4 12 0t8-3" fill="none" stroke="#5684bd" stroke-width="1.200"/><circle cx="65" cy="60" r="10" fill="#cfc850" stroke="#aba23c" stroke-width="3.500" stroke-dasharray="2.500 1.500"/><circle cx="65" cy="60" r="9.500" fill="#d6d060"/>`,
 trash:`<linearGradient id="a" x2="1" y2="0"><stop stop-color="#6d7276"/><stop offset=".15" stop-color="#80858a"/><stop offset=".4" stop-color="#5f646a"/><stop offset=".75" stop-color="#6d7277"/><stop offset="1" stop-color="#8b9094"/></linearGradient><path d="M3 4l6-6 10-2 6-3 8 4 8-2 8 5 9 1 6 6-4 10H10z" fill="#f1f1f0"/><path d="M18 4l12 3-6 7-10-3zM42-1l10 5-4 7-8-3z" fill="#303b49"/><path d="M28 1l7-1 1 6-8 2z" fill="#36b39a"/><path d="M44 4l9 1-5 6-7-1z" fill="#b0562f"/><path d="M8 8l7-6 3 6-6 5zM58 4l6 1-3 7z" fill="#c9cbd0"/><path d="M0 4q4 8 35 9 31-1 35-9L62 76q-3 8-26 8t-25-8z" fill="url(#a)" transform="translate(1)"/><path d="M1 4q4 8 35 9 31-1 35-9" fill="none" stroke="#a4a8ab" stroke-width="1.500"/><path d="M12 74q5 7 24 7t25-7" stroke="#9ea2a6" stroke-width="2" fill="none"/>`
};
customElements.define('dock-icon',class extends Base{
 css=':host{display:flex;flex-direction:column;align-items:center;width:80px;height:106px}svg{overflow:visible;display:block;filter:drop-shadow(0 1px 1px rgba(0,0,0,.4))}.dot{width:8px;height:8px;border-radius:50%;background:#c4a59a;margin-top:17px}';
 html(){return `<svg width="80" height="80">${DOCK[this.getAttribute('app')]}</svg>${this.hasAttribute('on')?'<div class="dot"></div>':''}`}
});
customElements.define('mac-dock',class extends Base{
 css=':host{position:absolute;left:275px;top:1662px;width:2331px;height:128px;border-radius:40px;background:linear-gradient(#40241b,#4a281d);border:2px solid #684c42;display:flex;box-shadow:0 0 0 1px rgba(10,5,2,.6);padding-top:17px}.i{height:106px}.s{width:2px;height:96px;background:#7b5d52;margin-top:-12px}';
 html(){const apps='finder* launch safari* mail maps photos facetime cal contacts reminders notes* freeform tv music store settings'.split(' ');
 const d=a=>`<dock-icon app="${a.replace('*','')}" ${a.endsWith('*')?'on':''}></dock-icon>`;
 return row(277,[...apps.map((a,i)=>[293+i*106,80,d(a)]),[2000,2,'<div class="s"></div>'],[2037,80,d('chrome*')],[2143,80,d('term*')],[2249,80,d('preview')],[2364,2,'<div class="s"></div>'],[2400,82,d('cert')],[2511,80,d('trash')]])}
});
customElements.define('mac-desktop',class extends Base{
 css=`:host{position:relative;width:2880px;height:1800px;overflow:hidden}.wall{position:absolute;inset:0;background:linear-gradient(#8db8dd 0,#86aed3 80px,#86a8cb 260px,#8c9fb9 420px,#9a97ae 600px,#9a90a8 650px,#6b96bb 720px,#558fb8 780px,#4c86ae 830px,#686785 870px,#5c5070 930px,#4f3f4d 1010px,#453133 1100px,#403032 1200px,#4c2412 1250px,#4c2214 1500px,#4a2115 1800px)}.tr{position:absolute;left:2600px;top:48px;width:280px;height:60px;background:#76abd4}.w3{position:absolute;left:2500px;top:80px;width:338px;height:200px;border-radius:0 34px 0 0;background:#557d96}svg{position:absolute;left:0;top:850px}`;
 html(){return `<div class="wall"></div><svg width="2880" height="950"><filter id="r" x="0" y="0" width="1" height="1" color-interpolation-filters="sRGB"><feTurbulence type="fractalNoise" baseFrequency=".014 .032" numOctaves="6" seed="8"/><feColorMatrix values=".620 0 0 0 -.01  .320 0 0 0 -.015  .200 0 0 0 -.012  0 0 0 0 .8"/></filter><linearGradient id="m" x2="0" y2="1"><stop stop-color="#000"/><stop offset=".25" stop-color="#222"/><stop offset=".38" stop-color="#666"/><stop offset=".42" stop-color="#fff"/></linearGradient><mask id="k"><rect width="2880" height="950" fill="url(#m)"/></mask><g mask="url(#k)"><rect width="2880" height="950" filter="url(#r)"/></g></svg><div class="tr"></div><div class="w3"></div><back-window></back-window><browser-window></browser-window><mac-dock></mac-dock><mac-menubar></mac-menubar>`}
});
/* A single line of text whose tracking is adjusted so it spans exactly `w` pixels. */
customElements.define('fit-text',class extends Base{
 css=':host{display:inline-block;white-space:pre;flex:none}';
 html(){return '<slot></slot>'}
 connectedCallback(){super.connectedCallback();const w=+this.getAttribute('w'),n=this.textContent.length;const nat=this.getBoundingClientRect().width;if(nat&&n)this.style.letterSpacing=((w-nat)/n).toFixed(3)+'px'}
});
</script>
</body>
</html>
